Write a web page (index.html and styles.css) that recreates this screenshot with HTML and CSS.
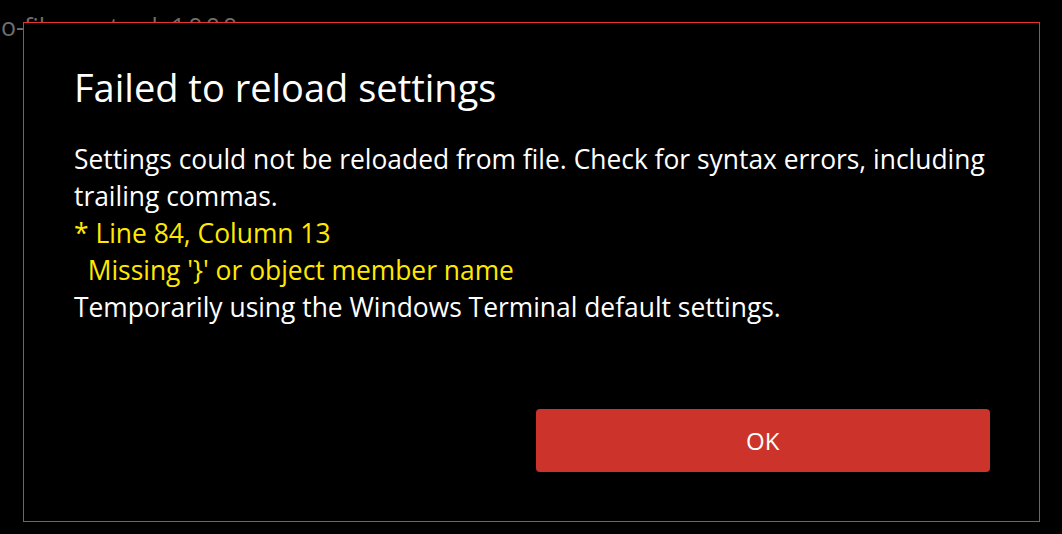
FILE: index.html
```html
<!DOCTYPE html>
<html>
<head>
<meta charset="utf-8">
<link rel="stylesheet" href="styles.css">
</head>
<body>
<div class="terminal">
  <div class="term-line">o-fil          t     k <span class="num">1000</span></div>
</div>
<div class="dialog">
  <h1 class="title">Failed to reload settings</h1>
  <div class="body">
    <p class="line">Settings could not be reloaded from file. Check for syntax errors, including trailing commas.</p>
    <p class="line warn">* Line 84, Column 13</p>
    <p class="line warn pre">  Missing '}' or object member name</p>
    <p class="line">Temporarily using the Windows Terminal default settings.</p>
  </div>
  <div class="buttons">
    <div class="spacer"></div>
    <button class="btn-primary">OK</button>
  </div>
</div>
</body>
</html>
```
FILE: styles.css
```css
html, body {
  margin: 0;
  padding: 0;
  background: #000;
  width: 1062px;
  height: 534px;
  overflow: hidden;
  font-family: "Open Sans", "Noto Sans", sans-serif;
}
.terminal {
  padding: 10px 0 0 1px;
}
.term-line {
  color: #6e6e6e;
  font-size: 25px;
  line-height: 32px;
  white-space: pre;
}
.num {
  letter-spacing: 3px;
}
.dialog {
  position: absolute;
  left: 23px;
  top: 22px;
  width: 1017px;
  height: 500px;
  box-sizing: border-box;
  border: 1px solid #e8332c;
  background: #000;
  padding: 40px 49px 49px 50px;
  display: flex;
  flex-direction: column;
}
.title {
  margin: 0;
  color: #fff;
  font-weight: 400;
  font-size: 38px;
  line-height: 48px;
}
.body {
  margin-top: 30px;
  color: #fff;
  font-size: 26.4px;
  line-height: 37px;
}
.line {
  margin: 0;
}
.warn {
  color: #ffe900;
}
.pre {
  white-space: pre;
}
.buttons {
  margin-top: auto;
  display: grid;
  grid-template-columns: 1fr 1fr;
  column-gap: 7px;
}
.btn-primary {
  height: 63px;
  border: none;
  border-radius: 4px;
  background: #cc332b;
  color: #fff;
  font-family: inherit;
  font-size: 24px;
  padding: 0;
}
```
